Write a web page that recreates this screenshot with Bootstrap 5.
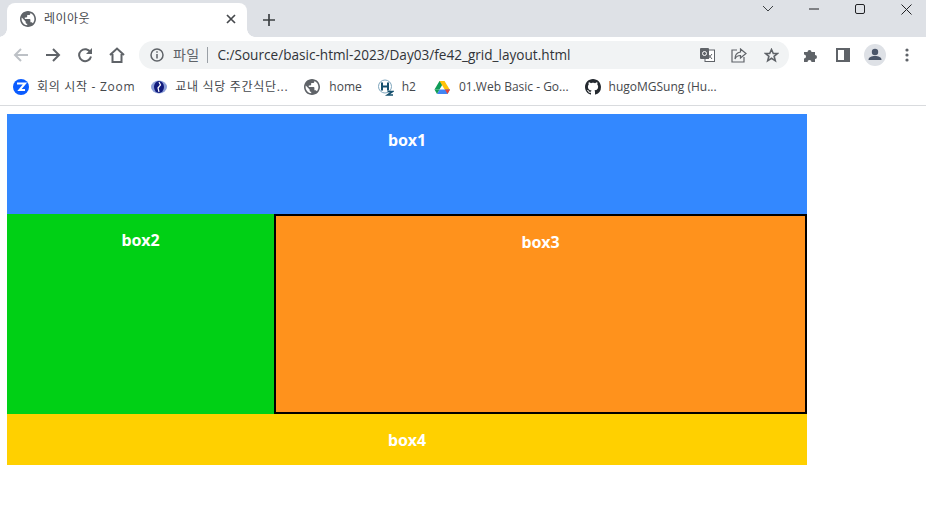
<!doctype html>
<html lang="ko"><head><meta charset="utf-8"><title>레이아웃</title>
<link href="https://cdn.jsdelivr.net/npm/bootstrap@5.3.0/dist/css/bootstrap.min.css" rel="stylesheet">
<style>
html,body{height:100%;overflow:hidden;background:#fff}
body{font-family:"Open Sans","Noto Sans CJK KR",sans-serif;color:#3c4043}
.chrome-ui{font-size:12px;letter-spacing:0}
.strip{height:37px;background:#dee1e6}
.tab-shape{width:240px;height:34px;margin:3px 0 0 7px;background:#fff;border-radius:8px 8px 0 0;padding:0 5px 2px 13px;position:relative}
.tab-shape::before,.tab-shape::after{content:"";position:absolute;bottom:0;width:8px;height:8px}
.tab-shape::before{left:-8px;background:radial-gradient(circle at 0 0,#dee1e6 7.5px,#fff 8px)}
.tab-shape::after{right:-8px;background:radial-gradient(circle at 100% 0,#dee1e6 7.5px,#fff 8px)}
.tab-title{margin-left:8px;font-size:12px;line-height:1;color:#45484c;letter-spacing:.5px}
.tab-x{margin-left:auto;margin-right:6px}
.new-tab{margin:14px 0 0 16px}
.win-ctrls{margin-left:auto;margin-right:-3px;height:18px}
.win-slot{width:46px;height:18px}
.toolbar{height:32px;background:#fff;padding-top:4px;padding-left:5px}
.nav-slot{width:32px;height:32px}
.omni{margin-left:6px;width:650px;height:28px;background:#f1f3f4;border-radius:14px;padding:0 2px 0 11px}
.omni-scheme{font-size:14px;color:#5f6368;margin-left:9px;line-height:1;letter-spacing:.3px}
.omni-sep{width:1px;height:16px;background:#9aa0a6;margin:0 9px 0 8px}
.omni-url{color:#303338;white-space:nowrap;font-size:13.6px}
.omni-end{margin-left:auto}
.omni-btn{width:32px;height:28px}
.side-first{margin-left:6px}
.marks{height:36px;background:#fff;border-bottom:1px solid #d9dbde;padding:0 0 0 13px;box-sizing:content-box}
.mark-item{font-size:12px;color:#45484c;white-space:nowrap}
.mark-item svg{margin-right:8px;flex:none}
.mark-item.gap-nine svg{margin-right:9px}
.ko-text{letter-spacing:.7px}
.mark-wide{margin-right:18px}
.page-wrap{padding:8px 0 0 7px}
.grid-boxes{display:grid;width:800px;grid-template-columns:267px 533px;grid-template-rows:100px 200px 51px;font-family:"Noto Sans","Noto Sans CJK KR",sans-serif}
.boxcell{color:#fff;font-weight:700;font-size:16px;text-align:center;padding-top:14px;line-height:24px}
.b-one{grid-column:1 / 3;background:#3388ff}
.b-two{background:#00d015}
.b-three{background:#ff921c;border:2px solid #000}
.b-four{grid-column:1 / 3;background:#ffd000}
</style></head>
<body>
<div class="chrome-ui">
<div class="strip d-flex align-items-start">
 <div class="tab-shape d-flex align-items-center">
  <svg width="16" height="16" viewBox="2 2 20 20"><path fill="#5f6368" d="M12 2C6.480 2 2 6.480 2 12s4.480 10 10 10 10-4.480 10-10S17.520 2 12 2zm-1 17.930c-3.950-.49-7-3.850-7-7.930 0-.62.08-1.210.21-1.790L9 15v1c0 1.100.9 2 2 2v1.930zm6.900-2.540c-.26-.81-1-1.390-1.900-1.390h-1v-3c0-.55-.45-1-1-1H8v-2h2c.55 0 1-.45 1-1V7h2c1.100 0 2-.9 2-2v-.41c2.930 1.190 5 4.060 5 7.410 0 2.080-.8 3.970-2.100 5.390z"/></svg>
  <span class="tab-title">레이아웃</span>
  <svg class="tab-x" width="10" height="10" viewBox="0 0 10 10"><path d="M1 1l8 8M9 1l-8 8" stroke="#45484c" stroke-width="1.700"/></svg>
 </div>
 <svg class="new-tab" width="12" height="12" viewBox="0 0 12 12"><path d="M6 0v12M0 6h12" stroke="#3c4043" stroke-width="1.700"/></svg>
 <div class="win-ctrls d-flex">
  <div class="win-slot d-flex align-items-center justify-content-center"><svg width="12" height="8" viewBox="0 0 12 8"><path d="M1 1l5 5 5-5" fill="none" stroke="#3c4043"/></svg></div>
  <div class="win-slot d-flex align-items-center justify-content-center"><svg width="10" height="2" viewBox="0 0 10 2"><path d="M0 1h10" stroke="#202124"/></svg></div>
  <div class="win-slot d-flex align-items-center justify-content-center"><svg width="10" height="10" viewBox="0 0 10 10"><rect x=".5" y=".5" width="9" height="9" rx="1.500" fill="none" stroke="#202124"/></svg></div>
  <div class="win-slot d-flex align-items-center justify-content-center"><svg width="11" height="11" viewBox="0 0 11 11"><path d="M.5.5l10 10M10.500.5l-10 10" stroke="#202124"/></svg></div>
 </div>
</div>
<div class="toolbar d-flex align-items-center">
 <div class="nav-slot d-flex align-items-center justify-content-center"><svg width="16" height="14" viewBox="0 0 16 14"><path d="M15 7H2M8 1L2 7l6 6" fill="none" stroke="#bdc1c6" stroke-width="2"/></svg></div>
 <div class="nav-slot d-flex align-items-center justify-content-center"><svg width="16" height="14" viewBox="0 0 16 14"><path d="M1 7h13M8 1l6 6-6 6" fill="none" stroke="#5f6368" stroke-width="2"/></svg></div>
 <div class="nav-slot d-flex align-items-center justify-content-center"><svg width="16" height="16" viewBox="0 0 16 16"><path d="M13.500 5.500A6 6 0 1 0 14 9.500" fill="none" stroke="#5f6368" stroke-width="2"/><path d="M15 1v6H9z" fill="#5f6368"/></svg></div>
 <div class="nav-slot d-flex align-items-center justify-content-center"><svg width="16" height="16" viewBox="0 0 16 16"><path d="M1 8l7-6.500L15 8M3.500 7v8h9V7" fill="none" stroke="#5f6368" stroke-width="2"/></svg></div>
 <div class="omni d-flex align-items-center">
  <svg width="14" height="14" viewBox="0 0 14 14"><circle cx="7" cy="7" r="6" fill="none" stroke="#5f6368" stroke-width="1.500"/><path d="M7 6v4.500M7 3.200v1.600" stroke="#5f6368" stroke-width="1.500"/></svg>
  <span class="omni-scheme">파일</span><span class="omni-sep"></span>
  <span class="omni-url">C:/Source/basic-html-2023/Day03/fe42_grid_layout.html</span>
  <div class="omni-end d-flex">
   <div class="omni-btn d-flex align-items-center justify-content-center"><svg width="15" height="14" viewBox="0 0 15 14"><rect x="5" y="2" width="9.500" height="11.500" fill="#fff" stroke="#5f6368"/><rect x="0" y="0" width="9" height="11" rx="1" fill="#5f6368"/><circle cx="4.500" cy="5.500" r="2" fill="none" stroke="#fff"/><path d="M8 6l4 5M12 6l-4 5" stroke="#5f6368"/></svg></div>
   <div class="omni-btn d-flex align-items-center justify-content-center"><svg width="16" height="15" viewBox="0 0 16 15"><path d="M6 2H1v12h12V9" fill="none" stroke="#5f6368" stroke-width="1.200"/><path d="M9.500 1l5.500 4.500L9.500 10V7.500C7 7.500 5 8.500 4 11c0-4 2-6.500 5.500-7z" fill="#f1f3f4" stroke="#5f6368" stroke-width="1.200"/></svg></div>
   <div class="omni-btn d-flex align-items-center justify-content-center"><svg width="15" height="15" viewBox="0 0 15 15"><path d="M7.500 1.500l1.800 4h4.200l-3.400 2.800 1.200 4.500-3.800-2.500-3.800 2.500 1.200-4.500L1.500 5.500h4.200z" fill="none" stroke="#5f6368" stroke-width="1.600"/></svg></div>
  </div>
 </div>
 <div class="nav-slot d-flex align-items-center justify-content-center side-first"><svg width="16" height="16" viewBox="0 0 16 16"><path d="M1 5h3.500a2 2 0 0 1 4 0H12v3a2 2 0 0 1 0 4v3H8.500a2 2 0 0 0-4 0H1v-3.500a2 2 0 0 0 0-4z" fill="#5f6368"/></svg></div>
 <div class="nav-slot d-flex align-items-center justify-content-center"><svg width="14" height="14" viewBox="0 0 14 14"><path fill-rule="evenodd" d="M0 0h14v14H0zM2 2v10h6V2z" fill="#5f6368"/></svg></div>
 <div class="nav-slot d-flex align-items-center justify-content-center"><svg width="22" height="22" viewBox="0 0 22 22"><circle cx="11" cy="11" r="11" fill="#dee1e6"/><circle cx="11" cy="8" r="3.200" fill="#4a5568"/><path d="M4.500 16c0-3 3-4 6.500-4s6.500 1 6.500 4z" fill="#4a5568"/></svg></div>
 <div class="nav-slot d-flex align-items-center justify-content-center"><svg width="4" height="14" viewBox="0 0 4 14"><circle cx="2" cy="2" r="1.600" fill="#5f6368"/><circle cx="2" cy="7" r="1.600" fill="#5f6368"/><circle cx="2" cy="12" r="1.600" fill="#5f6368"/></svg></div>
</div>
<div class="marks d-flex align-items-center">
 <div class="mark-item d-flex align-items-center me-3"><svg width="16" height="16" viewBox="0 0 16 16"><circle cx="8" cy="8" r="8" fill="#0b5cff"/><path d="M4 4.500h8L6.500 11H12" fill="none" stroke="#fff" stroke-width="2"/></svg><span class="ko-text">회의 시작 - Zoom</span></div>
 <div class="mark-item d-flex align-items-center me-3"><svg width="16" height="16" viewBox="0 0 16 16"><ellipse cx="8" cy="8" rx="8" ry="6.500" fill="#8c9fd8"/><ellipse cx="8" cy="8" rx="5" ry="6" fill="#101a7c"/><path d="M8 3l1.500 3L7 9l1 4" fill="none" stroke="#fff" stroke-width="1.200"/></svg><span class="ko-text">교내 식당 주간식단...</span></div>
 <div class="mark-item d-flex align-items-center me-3 gap-nine"><svg width="16" height="16" viewBox="2 2 20 20"><path fill="#5f6368" d="M12 2C6.480 2 2 6.480 2 12s4.480 10 10 10 10-4.480 10-10S17.520 2 12 2zm-1 17.930c-3.950-.49-7-3.850-7-7.930 0-.62.08-1.210.21-1.790L9 15v1c0 1.100.9 2 2 2v1.930zm6.900-2.540c-.26-.81-1-1.390-1.900-1.390h-1v-3c0-.55-.45-1-1-1H8v-2h2c.55 0 1-.45 1-1V7h2c1.100 0 2-.9 2-2v-.41c2.930 1.190 5 4.060 5 7.410 0 2.080-.8 3.970-2.100 5.390z"/></svg>home</div>
 <div class="mark-item d-flex align-items-center mark-wide"><svg width="16" height="17" viewBox="0 0 16 17"><circle cx="7" cy="7.500" r="6.500" fill="none" stroke="#7fa6bd"/><path d="M4 3.500v8M10 3.500v8M4 7.500h6" stroke="#16506e" stroke-width="2"/><path d="M9.500 12.500h5l-5 3.500h5.500" fill="none" stroke="#16506e" stroke-width="1.600"/></svg>h2</div>
 <div class="mark-item d-flex align-items-center me-3 gap-nine"><svg width="16" height="15" viewBox="0 0 16 15"><path d="M5.500 1h5l-5 8.500H0.500z" fill="#0f9d58"/><path d="M10.500 1L16 10h-5L5.500 1z" fill="#ffc107"/><path d="M3 14l2.500-4.500H16L13.500 14z" fill="#4285f4"/><path d="M3 14L.5 9.500h5L3 14z" fill="#0f9d58"/><path d="M11 9.500h5L13.500 14z" fill="#ea4335"/></svg>01.Web Basic - Go...</div>
 <div class="mark-item d-flex align-items-center"><svg width="16" height="16" viewBox="0 0 16 16"><path fill="#24292f" d="M8 0C3.580 0 0 3.580 0 8c0 3.540 2.290 6.530 5.470 7.590.4.070.55-.17.55-.38 0-.19-.01-.82-.01-1.490-2.010.37-2.530-.49-2.690-.94-.09-.23-.48-.94-.82-1.130-.28-.15-.68-.52-.01-.53.63-.01 1.080.58 1.230.82.720 1.210 1.870.87 2.330.66.070-.52.280-.87.510-1.070-1.780-.2-3.640-.89-3.640-3.950 0-.87.310-1.590.820-2.150-.08-.2-.36-1.020.08-2.120 0 0 .67-.21 2.200.82.640-.18 1.320-.27 2-.27s1.360.09 2 .27c1.530-1.040 2.200-.82 2.200-.82.44 1.100.160 1.920.080 2.120.51.560.82 1.270.82 2.150 0 3.070-1.870 3.750-3.650 3.950.29.25.54.73.54 1.480 0 1.070-.01 1.930-.01 2.200 0 .21.150.46.550.38A8.013 8.013 0 0 0 16 8c0-4.420-3.580-8-8-8z"/></svg>hugoMGSung (Hu...</div>
</div>
</div>
<main class="page-wrap">
 <div class="grid-boxes">
  <div class="boxcell b-one">box1</div>
  <div class="boxcell b-two">box2</div>
  <div class="boxcell b-three">box3</div>
  <div class="boxcell b-four">box4</div>
 </div>
</main>
<script src="https://cdn.jsdelivr.net/npm/bootstrap@5.3.0/dist/js/bootstrap.bundle.min.js"></script>
</body></html>
